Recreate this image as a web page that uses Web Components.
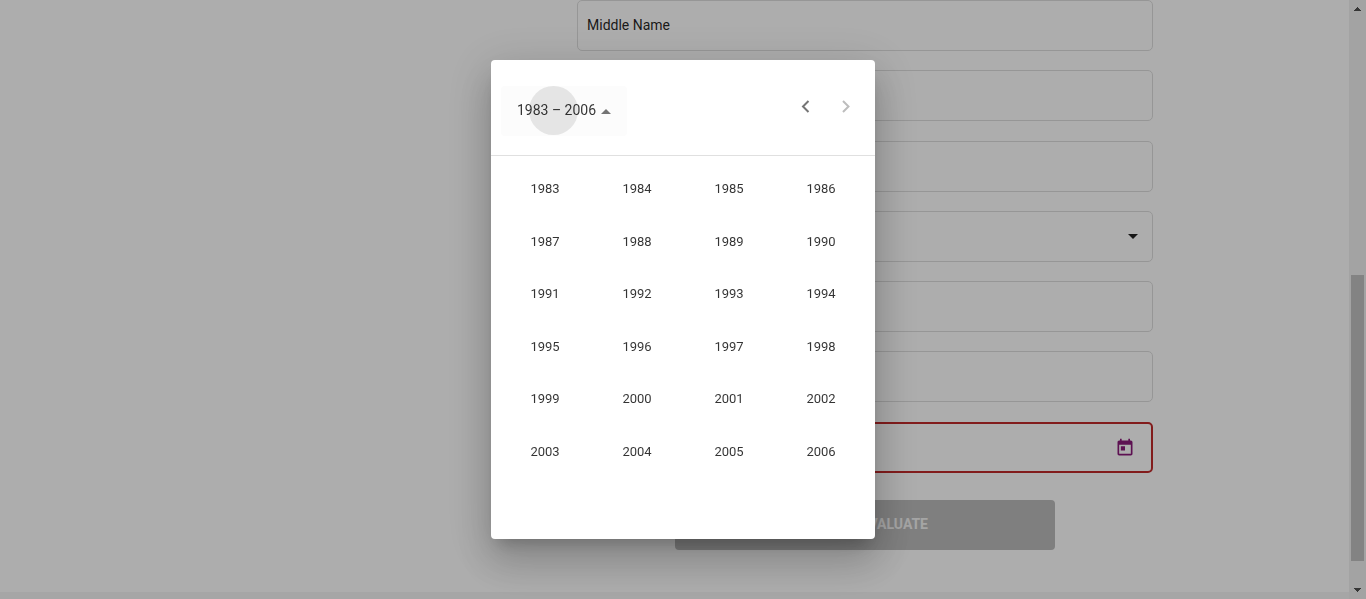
<!DOCTYPE html>
<html lang="en">
<head>
<meta charset="utf-8">
<title>Evaluation form</title>
<style>
html, body { margin: 0; height: 100%; overflow: hidden; }
body { font-family: Roboto, "Liberation Sans", sans-serif; color: rgba(0,0,0,.87); background: #fff; }
</style>
</head>
<body>
<app-shell></app-shell>
<script>
const define = (name, html, setup) => customElements.define(name, class extends HTMLElement {
  connectedCallback() {
    if (this.shadowRoot) return;
    const root = this.attachShadow({ mode: "open" });
    const t = document.createElement("template");
    t.innerHTML = typeof html === "function" ? html(this) : html;
    root.append(t.content.cloneNode(true));
    if (setup) setup(this, root);
  }
});

define("form-field", el => `
<style>
:host { display: block; }
label { display: flex; align-items: center; box-sizing: border-box; height: 51px; padding: 0 9px; border: 1px solid #dedede; border-radius: 5px; }
:host([invalid]) label { border: 2px solid #c02a2a; padding: 0 8px; }
input, select { flex: 1; min-width: 0; height: 32px; padding: 0 0 2px; border: 0; outline: 0; background: none; appearance: none; font: 14px/20px Roboto, sans-serif; color: inherit; }
input::placeholder { color: rgba(0,0,0,.87); opacity: 1; }
svg { display: block; margin-right: 5px; fill: rgba(0,0,0,.87); }
</style>
<label>${el.hasAttribute("select")
  ? `<select aria-label="Option"></select><svg width="10" height="5" viewBox="0 0 10 5"><path d="M0 0h10L5 5z"/></svg>`
  : `<input type="text" aria-label="${el.getAttribute("label") || "Field"}" placeholder="${el.getAttribute("label") || ""}">`}<slot></slot></label>`);

define("calendar-toggle", `
<style>
:host { display: block; margin-right: 8px; }
button { display: block; padding: 0; border: 0; background: none; color: #8a1a7a; }
svg { display: block; fill: currentColor; }
</style>
<button type="button" aria-label="Open calendar"><svg width="20" height="20" viewBox="0 0 24 24"><path d="M19 3h-1V1h-2v2H8V1H6v2H5c-1.11 0-1.99.9-1.99 2L3 19c0 1.100.89 2 2 2h14c1.100 0 2-.9 2-2V5c0-1.100-.9-2-2-2zm0 16H5V8h14v11zM7 10h5v5H7z"/></svg></button>`);

define("applicant-form", `
<style>
:host { display: block; box-sizing: border-box; width: 576px; max-width: 100%; }
section { display: grid; gap: 19px; margin-bottom: 20px; }
section.date { margin-bottom: 27px; }
.submit { display: block; box-sizing: border-box; width: 380px; max-width: 100%; height: 50px; margin: 0 auto; padding: 0 127px 2px 0; border: 0; border-radius: 4px; background: #bcbcbc; color: #f4f4f4; font: bold 14px/20px Roboto, sans-serif; text-align: right; }
</style>
<section>
  <form-field label="Middle Name"></form-field>
  <form-field></form-field>
</section>
<section>
  <form-field></form-field>
  <form-field select></form-field>
  <form-field></form-field>
  <form-field></form-field>
</section>
<section class="date">
  <form-field invalid><calendar-toggle></calendar-toggle></form-field>
</section>
<button class="submit" type="submit">EVALUATE</button>`);

define("scroll-rail", `
<style>
:host { display: grid; grid-template-rows: 17px 258fr 286fr 20fr 18px; justify-items: center; width: 17px; background: #f1f1f1; }
svg { fill: #505050; align-self: center; }
.thumb { grid-row: 3; width: 13px; background: #c1c1c1; }
.down { grid-row: 5; }
</style>
<svg width="7" height="4" viewBox="0 0 7 4"><path d="M3 0h1v1h1v1h1v1h1v1H0V3h1V2h1V1h1z"/></svg>
<div class="thumb"></div>
<svg class="down" width="7" height="4" viewBox="0 0 7 4"><path d="M0 0h7v1H6v1H5v1H4v1H3V3H2V2H1V1H0z"/></svg>`);

define("year-table", `
<style>
:host { display: block; padding: 7px 8px 0; }
table { width: 100%; height: 315px; border-collapse: collapse; table-layout: fixed; }
td { padding: 0; text-align: center; }
button { padding: 0 12px; height: 36px; border: 0; border-radius: 18px; background: none; font: 13px/18px Roboto, sans-serif; color: rgba(0,0,0,.8); }
</style>
<table aria-label="Years"><tbody></tbody></table>`, (el, root) => {
  const body = root.querySelector("tbody");
  const first = Number(el.getAttribute("from")), last = Number(el.getAttribute("to"));
  for (let y = first; y <= last; y += 4) {
    const row = body.insertRow();
    for (let i = 0; i < 4; i++) {
      const b = document.createElement("button");
      b.type = "button";
      b.textContent = y + i;
      row.insertCell().append(b);
    }
  }
});

define("year-picker", `
<style>
:host { display: block; box-sizing: border-box; width: 384px; max-width: 100%; padding-bottom: 61px; background: #fff; border-radius: 4px; box-shadow: 0 11px 15px -7px rgba(0,0,0,.2), 0 24px 38px 3px rgba(0,0,0,.14), 0 9px 46px 8px rgba(0,0,0,.12); }
header { display: flex; align-items: flex-start; justify-content: space-between; box-sizing: border-box; height: 96px; padding: 26px 9px 0 10px; border-bottom: 1px solid #e0e0e0; }
button { border: 0; background: none; padding: 0; color: rgba(0,0,0,.8); }
.period { position: relative; display: flex; align-items: center; gap: 5px; height: 50px; padding: 0 16px; border-radius: 4px; background: #fcfcfc; font: 14px/20px Roboto, sans-serif; }
.ripple { position: absolute; left: 28px; top: 0; width: 49px; height: 49px; border-radius: 50%; background: #e5e5e5; }
.period span, .period svg { position: relative; }
.period span { padding-bottom: 2px; }
.period svg { fill: rgba(0,0,0,.54); }
nav { display: flex; }
nav button { display: grid; place-items: center; width: 40px; height: 41px; color: #757575; }
nav button:disabled { color: #bdbdbd; }
nav svg { fill: none; stroke: currentColor; stroke-width: 2; }
</style>
<header>
  <button class="period" type="button"><i class="ripple"></i><span>1983 – 2006</span><svg width="10" height="5" viewBox="0 0 10 5"><path d="M0 5h10L5 0z"/></svg></button>
  <nav>
    <button type="button" aria-label="Previous 24 years"><svg width="10" height="13" viewBox="0 0 10 13"><path d="M7.500 1 2 6.500 7.500 12"/></svg></button>
    <button type="button" aria-label="Next 24 years" disabled><svg width="10" height="13" viewBox="0 0 10 13"><path d="M2 1 7.500 6.500 2 12"/></svg></button>
  </nav>
</header>
<year-table from="1983" to="2006"></year-table>`);

define("modal-overlay", `
<style>
:host { position: fixed; inset: 0; display: grid; place-items: center; background: rgba(0,0,0,.32); }
</style>
<slot></slot>`);

define("app-shell", `
<style>
:host { display: grid; grid-template-columns: 1fr 17px; height: 100%; }
main { display: flex; flex-direction: column; justify-content: space-between; align-items: flex-end; min-height: 0; }
applicant-form { margin-right: 196px; }
footer { width: 100%; height: 7px; background: #f5f5f5; }
</style>
<main><applicant-form></applicant-form><footer></footer></main>
<scroll-rail></scroll-rail>
<modal-overlay><year-picker role="dialog" aria-label="Choose year"></year-picker></modal-overlay>`);
</script>
</body>
</html>
